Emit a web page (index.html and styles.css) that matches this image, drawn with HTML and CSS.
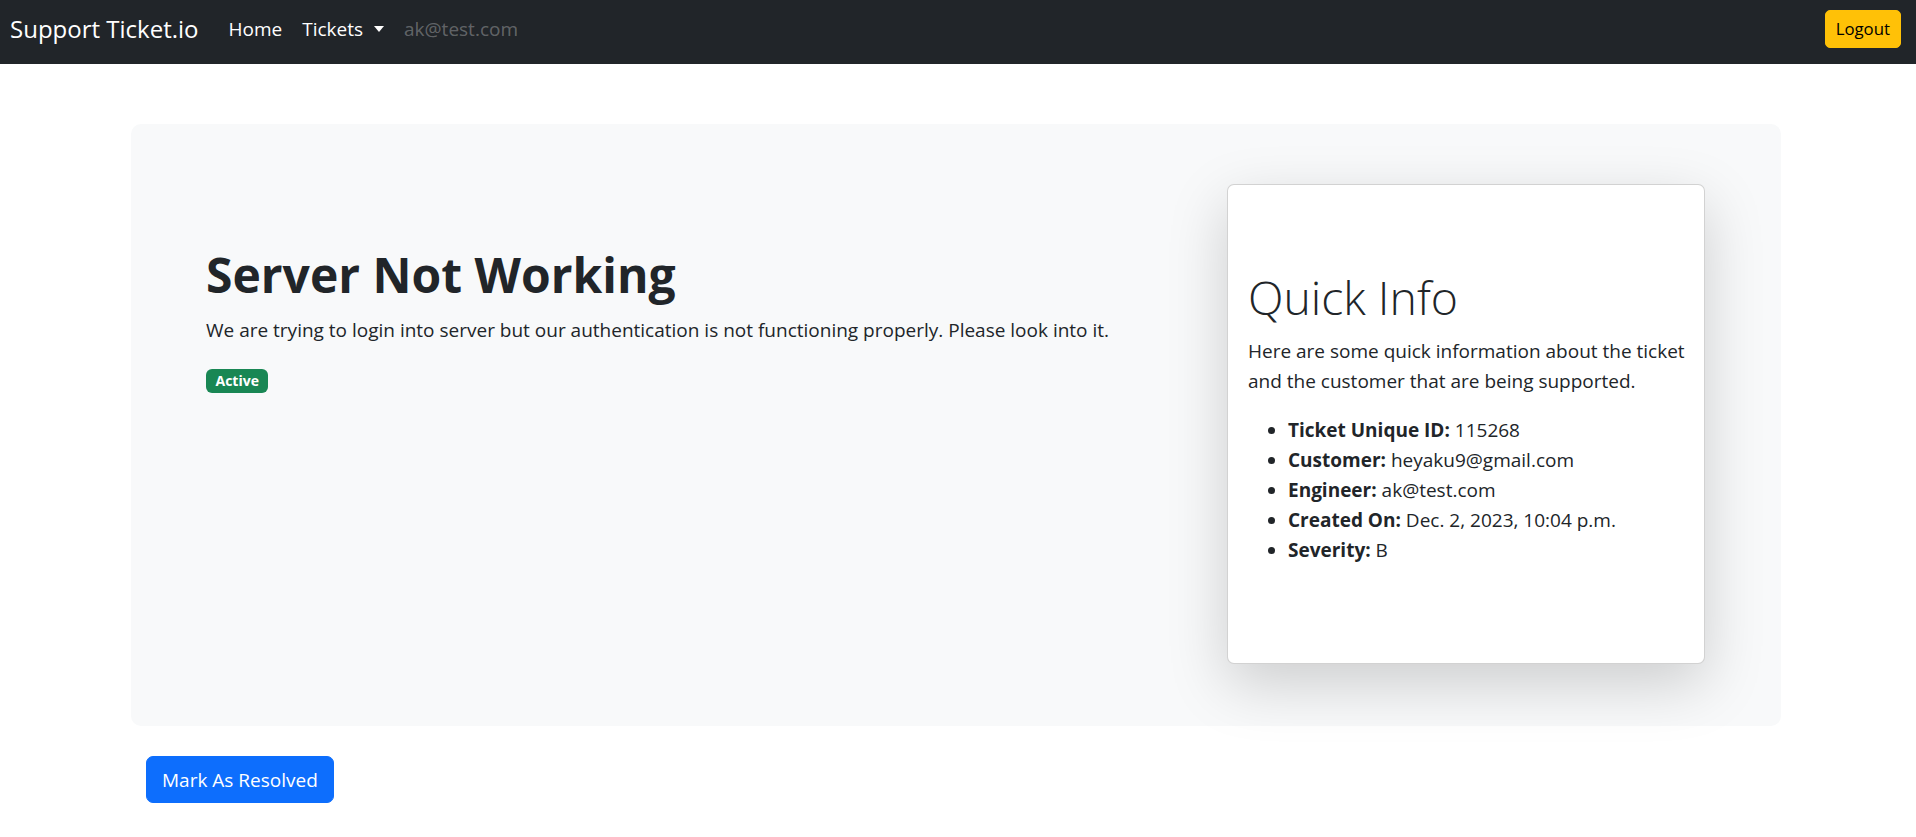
FILE: index.html
```html
<!DOCTYPE html>
<html lang="en">
<head>
<meta charset="utf-8">
<title>Support Ticket.io</title>
<link rel="stylesheet" href="styles.css">
</head>
<body>
<nav class="navbar">
  <a class="brand" href="#">Support Ticket.io</a>
  <ul class="nav">
    <li><a class="nav-link" href="#">Home</a></li>
    <li><a class="nav-link" href="#">Tickets<span class="caret"></span></a></li>
    <li><span class="nav-link disabled">ak@test.com</span></li>
  </ul>
  <button class="btn-logout" type="button">Logout</button>
</nav>

<main class="main">
  <section class="jumbo">
    <div class="left-col">
      <h1 class="title">Server Not Working</h1>
      <p class="desc">We are trying to login into server but our authentication is not functioning properly. Please look into it.</p>
      <div class="badge-row"><span class="badge">Active</span></div>
    </div>
    <div class="card">
      <div class="card-body">
        <h2 class="card-title">Quick Info</h2>
        <p class="card-text">Here are some quick information about the ticket and the customer that are being supported.</p>
        <ul class="info-list">
          <li><b>Ticket Unique ID:</b> 115268</li>
          <li><b>Customer:</b> heyaku9@gmail.com</li>
          <li><b>Engineer:</b> ak@test.com</li>
          <li><b>Created On:</b> Dec. 2, 2023, 10:04 p.m.</li>
          <li><b>Severity:</b> B</li>
        </ul>
      </div>
    </div>
  </section>
  <div class="actions">
    <button class="btn-primary" type="button">Mark As Resolved</button>
  </div>
</main>
</body>
</html>
```
FILE: styles.css
```css
* { box-sizing: border-box; }
html, body { margin: 0; padding: 0; }
body {
  font-family: "Open Sans", "Noto Sans", sans-serif;
  font-size: 19px;
  line-height: 30px;
  color: #212529;
  background: #fff;
}
a { text-decoration: none; }

/* navbar */
.navbar {
  display: flex;
  align-items: flex-start;
  height: 64px;
  padding: 10px 15px 0 10px;
  background: #212529;
}
.brand {
  margin-top: 4px;
  margin-right: 20px;
  font-size: 24px;
  line-height: 30px;
  color: #fff;
  white-space: nowrap;
}
.nav {
  display: flex;
  list-style: none;
  margin: 4px 0 0;
  padding: 0;
}
.nav-link {
  display: block;
  padding: 0 10px;
  font-size: 19px;
  line-height: 30px;
  color: #fff;
  white-space: nowrap;
}
.nav-link.disabled { color: rgba(255, 255, 255, 0.3); }
.caret {
  display: inline-block;
  margin-left: 11px;
  vertical-align: 4px;
  border-top: 6px solid #fff;
  border-left: 5px solid transparent;
  border-right: 5px solid transparent;
}
.btn-logout {
  margin-left: auto;
  height: 38px;
  padding: 5px 10px;
  border: 1px solid #ffc107;
  border-radius: 5px;
  background: #ffc107;
  color: #000;
  font-family: inherit;
  font-size: 16.8px;
  line-height: 26px;
}

/* main */
.main {
  width: 1650px;
  margin: 60px 0 0 131px;
}
.jumbo {
  display: flex;
  justify-content: space-between;
  align-items: flex-start;
  padding: 60px 76px 62px 75px;
  background: #f8f9fa;
  border-radius: 10px;
}
.left-col { padding-top: 61px; }
.title {
  margin: 0 0 10px;
  font-size: 48px;
  line-height: 60px;
  font-weight: 700;
}
.desc {
  margin: 0 0 24px;
  font-size: 19px;
  line-height: 30px;
}
.badge-row { display: flex; }
.badge {
  display: block;
  padding: 5px 9.5px;
  font-size: 14px;
  line-height: 14px;
  font-weight: 700;
  color: #fff;
  background: #198754;
  border-radius: 6px;
}

.card {
  width: 478px;
  height: 480px;
  background: #fff;
  border: 1px solid rgba(0, 0, 0, 0.175);
  border-radius: 7px;
  box-shadow: 0 20px 60px rgba(0, 0, 0, 0.175);
}
.card-body { padding: 82px 12px 20px 20px; }
.card-title {
  margin: 0 0 9px;
  font-size: 46.4px;
  line-height: 60px;
  font-weight: 300;
}
.card-text { margin: 0 0 19px; }
.info-list {
  margin: 0 0 20px;
  padding-left: 40px;
}
.info-list b { font-weight: 700; }

.actions { padding: 30px 15px; }
.btn-primary {
  height: 47px;
  padding: 7.5px 15px;
  border: 1px solid #0d6efd;
  border-radius: 7px;
  background: #0d6efd;
  color: #fff;
  font-family: inherit;
  font-size: 19px;
  line-height: 30px;
}
```
